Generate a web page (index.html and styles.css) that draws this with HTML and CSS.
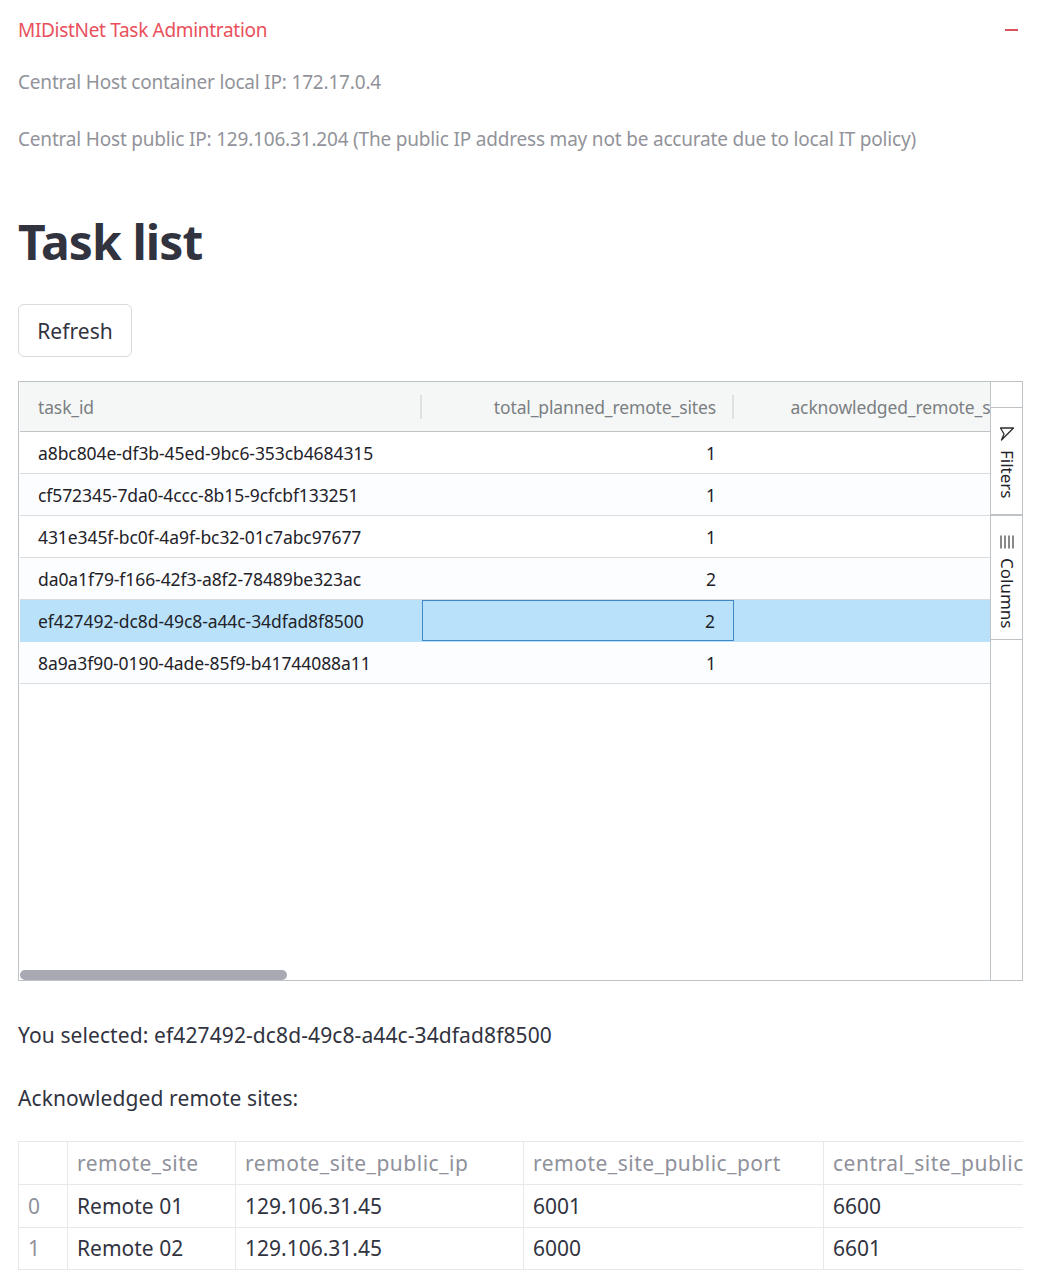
FILE: index.html
```html
<!DOCTYPE html>
<html lang="en">
<head>
<meta charset="utf-8">
<title>MIDistNet Task Admintration</title>
<link rel="stylesheet" href="styles.css">
</head>
<body>
<main class="page">
  <section class="expander">
    <div class="expander-head">
      <span>MIDistNet Task Admintration</span>
      <span class="minus"></span>
    </div>
    <p class="info info-first">Central Host container local IP: 172.17.0.4</p>
    <p class="info info-second">Central Host public IP: 129.106.31.204 (The public IP address may not be accurate due to local IT policy)</p>
  </section>

  <h1 class="title">Task list</h1>
  <button class="refresh" type="button">Refresh</button>

  <section class="grid">
    <div class="grid-main">
      <div class="grid-head">
        <div class="hcell c1">task_id</div>
        <div class="hcell c2 num">total_planned_remote_sites</div>
        <div class="hcell c3 num">acknowledged_remote_sites</div>
      </div>
      <div class="grid-body">
        <div class="row"><div class="cell c1">a8bc804e-df3b-45ed-9bc6-353cb4684315</div><div class="cell c2 num">1</div></div>
        <div class="row alt"><div class="cell c1">cf572345-7da0-4ccc-8b15-9cfcbf133251</div><div class="cell c2 num">1</div></div>
        <div class="row"><div class="cell c1">431e345f-bc0f-4a9f-bc32-01c7abc97677</div><div class="cell c2 num">1</div></div>
        <div class="row alt"><div class="cell c1">da0a1f79-f166-42f3-a8f2-78489be323ac</div><div class="cell c2 num">2</div></div>
        <div class="row selected"><div class="cell c1">ef427492-dc8d-49c8-a44c-34dfad8f8500</div><div class="cell c2 num focus">2</div></div>
        <div class="row alt"><div class="cell c1">8a9a3f90-0190-4ade-85f9-b41744088a11</div><div class="cell c2 num">1</div></div>
      </div>
      <div class="hscroll"><div class="hthumb"></div></div>
    </div>
    <aside class="side">
      <div class="side-top"></div>
      <div class="tab tab-filters">
        <svg class="tab-icon" width="16" height="16" viewBox="0 0 16 16"><path d="M1.5 2 H14.5 L2.5 14 L5 8 Z" fill="none" stroke="#2b2b2b" stroke-width="1.3" stroke-linejoin="round"/></svg>
        <span class="tab-label">Filters</span>
      </div>
      <div class="tab tab-columns">
        <svg class="tab-icon" width="16" height="16" viewBox="0 0 16 16"><path d="M2 1.5v13M6 1.5v13M10 1.5v13M14 1.5v13" fill="none" stroke="#2b2b2b" stroke-width="1.1"/></svg>
        <span class="tab-label">Columns</span>
      </div>
    </aside>
  </section>

  <p class="text selected-text">You selected: ef427492-dc8d-49c8-a44c-34dfad8f8500</p>
  <p class="text ack-text">Acknowledged remote sites:</p>

  <div class="table-wrap">
    <table class="sites">
      <colgroup><col class="w0"><col class="w1"><col class="w2"><col class="w3"><col class="w4"></colgroup>
      <thead>
        <tr><th></th><th>remote_site</th><th>remote_site_public_ip</th><th>remote_site_public_port</th><th>central_site_public_port</th></tr>
      </thead>
      <tbody>
        <tr><th>0</th><td>Remote 01</td><td>129.106.31.45</td><td>6001</td><td>6600</td></tr>
        <tr><th>1</th><td>Remote 02</td><td>129.106.31.45</td><td>6000</td><td>6601</td></tr>
      </tbody>
    </table>
  </div>
</main>
</body>
</html>
```
FILE: styles.css
```css
* { box-sizing: border-box; }
html, body { margin: 0; padding: 0; background: #fff; }
body { font-family: "Noto Sans", "Open Sans", sans-serif; color: #31333f; overflow: hidden; }
.page { width: 1040px; height: 1286px; padding: 0 17px 0 18px; overflow: hidden; }

.expander-head { display: flex; justify-content: space-between; align-items: center; height: 60px; padding-right: 5px; font-size: 19px; letter-spacing: -0.31px; color: #e9505c; }
.minus { width: 13px; height: 2px; background: #d9535c; }
.info { margin: 0; font-size: 19px; letter-spacing: -0.19px; color: #92939a; line-height: 26px; white-space: nowrap; }
.info-first { padding-top: 9px; }
.info-second { padding-top: 31px; }

.title { margin: 0; padding-top: 56px; font-size: 48px; line-height: 68px; font-weight: 700; letter-spacing: -0.9px; color: #31333f; }

.refresh { display: block; margin-top: 28px; width: 114px; height: 53px; padding: 0; background: #fff; border: 1px solid #d9dbe0; border-radius: 6px; font: inherit; font-size: 21px; letter-spacing: 0.05px; color: #31333f; }

.grid { display: flex; margin-top: 24px; height: 600px; border: 1px solid #bdc3c7; }
.grid-main { position: relative; width: 971px; padding-left: 1px; overflow: hidden; }
.grid-head { display: flex; height: 50px; background: #f5f7f7; border-bottom: 1px solid #bdc3c7; color: #7b7f82; font-size: 17.5px; letter-spacing: -0.13px; }
.hcell { position: relative; display: flex; align-items: center; padding: 0 18px 0 18px; flex: none; white-space: nowrap; }
.hcell.c1::after, .hcell.c2::after { content: ""; position: absolute; right: 0; top: 13px; width: 2px; height: 24px; background: #dde1e2; }
.c1 { width: 402px; }
.c2 { width: 312px; }
.c3 { width: 303px; }
.num { justify-content: flex-end; }
.grid-body { font-size: 17.5px; letter-spacing: -0.08px; color: #1f2229; }
.row { display: flex; height: 42px; border-bottom: 1px solid #d9dcde; }
.row.alt { background: #fcfdfe; }
.row.selected { background: #b9e2fa; border-bottom-color: #b9e2fa; }
.cell { display: flex; align-items: center; padding: 0 18px; flex: none; white-space: nowrap; }
.cell.focus { border: 1px solid #3f8ac6; padding: 0 18px 0 17px; }

.hscroll { position: absolute; left: 1px; right: 0; bottom: 0; height: 10px; }
.hthumb { width: 267px; height: 10px; border-radius: 5px; background: #a9a9b4; }

.side { width: 32px; border-left: 1px solid #bdc3c7; display: flex; flex-direction: column; }
.side-top { height: 26px; border-bottom: 1px solid #bdc3c7; }
.tab { display: flex; flex-direction: column; align-items: center; color: #1f2229; font-size: 17px; padding-top: 18px; gap: 8px; }
.tab-filters { height: 108px; border-bottom: 2px solid #bdc3c7; }
.tab-columns { height: 124px; border-bottom: 1px solid #bdc3c7; }
.tab-label { writing-mode: vertical-rl; line-height: 16px; }

.text { margin: 0; font-size: 21px; letter-spacing: 0.1px; line-height: 28px; color: #31333f; white-space: nowrap; }
.selected-text { padding-top: 40px; }
.ack-text { padding-top: 35px; }

.table-wrap { margin-top: 29px; width: 1005px; overflow: hidden; }
.sites { border-collapse: collapse; table-layout: fixed; width: 1205px; font-size: 21px; letter-spacing: 0; }
.w0 { width: 49px; } .w1 { width: 168px; } .w2 { width: 288px; } .w3 { width: 300px; } .w4 { width: 400px; }
.sites th, .sites td { border: 1px solid #e6e8ec; text-align: left; font-weight: 400; padding: 0 0 0 9px; white-space: nowrap; overflow: hidden; }
.sites thead th { height: 43px; color: #8f919b; letter-spacing: 0.5px; }
.sites tbody th { color: #8f919b; }
.sites tbody tr { height: 42.5px; }
.sites td { color: #31333f; }
```
